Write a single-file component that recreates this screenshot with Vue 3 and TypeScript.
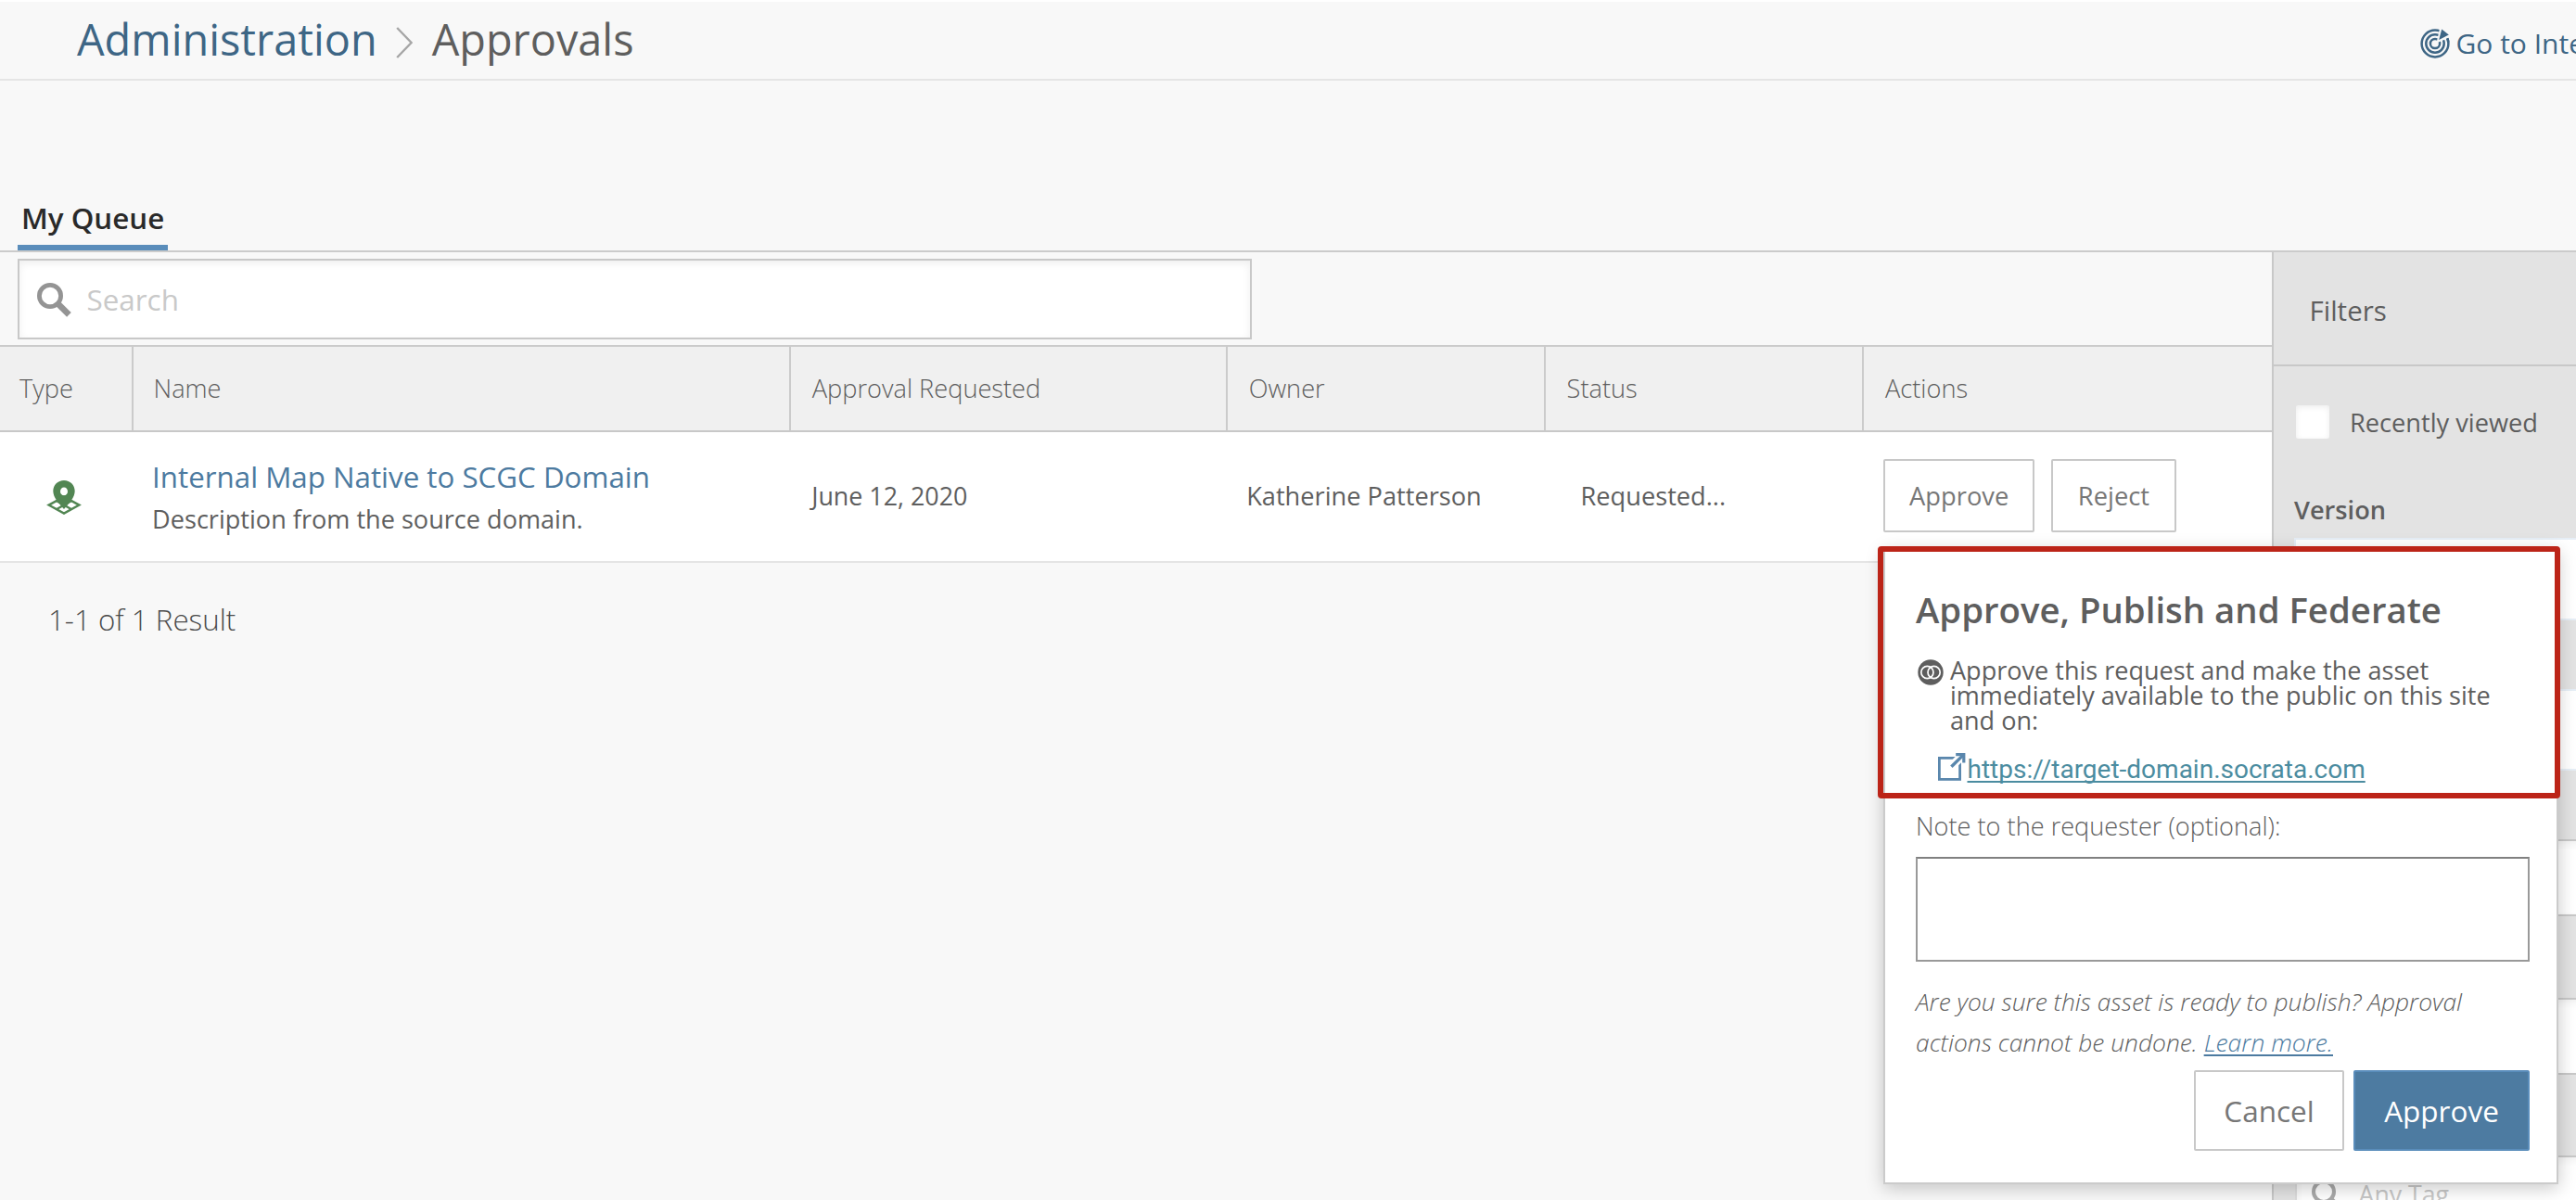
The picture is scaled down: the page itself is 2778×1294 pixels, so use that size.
<script setup lang="ts">
interface Column { key: string; label: string }

const columns: Column[] = [
  { key: 'type', label: 'Type' },
  { key: 'name', label: 'Name' },
  { key: 'date', label: 'Approval Requested' },
  { key: 'owner', label: 'Owner' },
  { key: 'status', label: 'Status' },
  { key: 'actions', label: 'Actions' }
]

const asset = {
  name: 'Internal Map Native to SCGC Domain',
  description: 'Description from the source domain.',
  requested: 'June 12, 2020',
  owner: 'Katherine Patterson',
  status: 'Requested...'
}
</script>

<template>
  <div class="page">
    <header class="topbar">
      <nav class="crumbs">
        <a class="crumb-link">Administration</a>
        <svg class="chevron" width="18" height="34" viewBox="0 0 18 34"><path d="M1.2 1 L16.6 17 L1.2 33" fill="none" stroke="#a6a6a6" stroke-width="2.4" /></svg>
        <span>Approvals</span>
      </nav>
      <a class="goto">
        <svg width="32" height="32" viewBox="0 0 32 32">
          <g fill="none" stroke="#3e6685" stroke-width="2.5">
            <circle cx="16" cy="16" r="14.4" />
            <circle cx="16" cy="16" r="9.7" />
            <circle cx="16" cy="16" r="5.1" />
          </g>
          <path d="M17.5 15.5 L21.2 -1 L33.5 8.6 Z" fill="#f8f8f8" />
          <path d="M29.2 10.2 A14.4 14.4 0 0 1 30.3 14.5" fill="none" stroke="#3e6685" stroke-width="2.5" />
          <path d="M20.2 12 L23.2 0.6 L30.8 6.6 Z" fill="#3e6685" />
        </svg>
        <span>Go to Internal</span>
      </a>
    </header>

    <div class="tabs"><a class="tab">My Queue</a></div>

    <main class="body">
      <section class="queue">
        <div class="search-row">
          <div class="search">
            <svg width="37" height="37" viewBox="0 0 37 37">
              <circle cx="14" cy="14" r="11.6" fill="none" stroke="#949494" stroke-width="4.8" />
              <path d="M22.6 22.6 L34.4 34.4" stroke="#949494" stroke-width="6.6" />
            </svg>
            <span>Search</span>
          </div>
        </div>

        <div class="grid head">
          <div v-for="c in columns" :key="c.key" class="th" :class="'th-' + c.key">{{ c.label }}</div>
        </div>

        <div class="grid row">
          <div class="cell-type">
            <svg width="38" height="38" viewBox="0 0 38 38">
              <g fill="none" stroke="#528653" stroke-width="2.4">
                <path d="M2.6 26.6 L19 17.6 L35.4 26.6 L19 35.6 Z" />
                <path d="M10.8 22 L27.2 31.2 M27.2 22 L10.8 31.2" />
              </g>
              <path fill-rule="evenodd" fill="#528653" d="M19 0 C25.6 0 30.7 5 30.7 11.6 C30.7 18.6 24.4 25 19 31 C13.6 25 7.3 18.6 7.3 11.6 C7.3 5 12.4 0 19 0 Z M19 7.6 A4 4.3 0 1 0 19 16.2 A4 4.3 0 1 0 19 7.6 Z" />
            </svg>
          </div>
          <div class="cell-name">
            <a class="asset">{{ asset.name }}</a>
            <span class="desc">{{ asset.description }}</span>
          </div>
          <div class="cell-date">{{ asset.requested }}</div>
          <div class="cell-owner">{{ asset.owner }}</div>
          <div class="cell-status">{{ asset.status }}</div>
          <div class="cell-actions">
            <button class="btn small approve-row">Approve</button>
            <button class="btn small reject-row">Reject</button>
          </div>
        </div>

        <div class="result">1-1 of 1 Result</div>
      </section>

      <aside class="filters">
        <div class="filters-head">Filters</div>
        <div class="recent"><span class="check"></span><span>Recently viewed</span></div>
        <div class="group-label">Version</div>
        <div class="select first"></div>
        <div class="select second"></div>
        <div class="field f1"></div>
        <div class="field f2"></div>
        <div class="field f3">
          <svg width="34" height="34" viewBox="0 0 34 34">
            <circle cx="13" cy="14" r="11" fill="none" stroke="#a9a9a9" stroke-width="4" />
            <path d="M21 22 L31 32" stroke="#a9a9a9" stroke-width="5" />
          </svg>
          <span>Any Tag</span>
        </div>
      </aside>
    </main>

    <div class="popup">
      <h2>Approve, Publish and Federate</h2>
      <div class="explain">
        <svg width="28" height="28" viewBox="0 0 28 28">
          <circle cx="14" cy="14" r="13.7" fill="#5e5e5e" />
          <g fill="none" stroke="#fff" stroke-width="1.7">
            <circle cx="10.4" cy="14" r="6.6" />
            <circle cx="17.6" cy="14" r="6.6" />
          </g>
        </svg>
        <p>Approve this request and make the asset<br />immediately available to the public on this site<br />and on:</p>
      </div>
      <div class="target">
        <svg width="30" height="31" viewBox="0 0 30 31">
          <rect x="1.4" y="5.4" width="22.2" height="23" fill="none" stroke="#5a87ad" stroke-width="2.8" />
          <path d="M12 17 L28 1" stroke="#fff" stroke-width="9" />
          <path d="M14.4 14.8 L27 2.4" stroke="#5a87ad" stroke-width="3.4" />
          <path d="M19.2 1.7 H27.8 V10.6" fill="none" stroke="#5a87ad" stroke-width="3.2" />
        </svg>
        <a>https://target-domain.socrata.com</a>
      </div>
      <label class="note">Note to the requester (optional):</label>
      <div class="note-box"></div>
      <p class="confirm">Are you sure this asset is ready to publish? Approval<br />actions cannot be undone. <a>Learn more.</a></p>
      <div class="buttons">
        <button class="btn cancel">Cancel</button>
        <button class="btn primary">Approve</button>
      </div>
      <div class="highlight"></div>
    </div>
  </div>
</template>

<style>
body { margin: 0; background: #f8f8f8; overflow: hidden; }
</style>

<style scoped>
.page, .page * { box-sizing: border-box; }
.page {
  position: relative;
  width: 2778px;
  height: 1294px;
  overflow: hidden;
  display: flex;
  flex-direction: column;
  background: #f8f8f8;
  color: #5e5e5e;
  font-family: "Open Sans", sans-serif;
  font-size: 27.2px;
  white-space: nowrap;
}
svg { display: block; flex: none; }
p, h2 { margin: 0; }

.topbar {
  flex: none;
  height: 87px;
  border-top: 2px solid #fff;
  border-bottom: 2px solid #e5e5e5;
  display: flex;
  align-items: flex-start;
  padding-left: 83px;
}
.crumbs { display: flex; align-items: flex-start; font-size: 46.85px; line-height: 81px; width: 2526.5px; flex: none; }
.crumb-link { color: #3e6685; }
.chevron { margin: 27px 21px 0 20px; }
.goto { display: flex; align-items: flex-start; color: #3e6685; font-size: 30px; line-height: 79px; padding-top: 5px; flex: none; }
.goto svg { margin: 23.5px 7px 0 0; }

.tabs { flex: none; height: 185px; border-bottom: 2px solid #cbcbcb; display: flex; align-items: flex-end; padding-left: 19px; }
.tab {
  width: 162px;
  padding: 0 0 7px 4px;
  border-bottom: 6px solid #5a8dbb;
  font-size: 31.3px;
  font-weight: 600;
  line-height: 44px;
  color: #2a2a2a;
}

.body { flex: 1; min-height: 0; display: flex; }
.queue { width: 2450px; flex: none; }
.search-row { height: 100px; padding: 7px 0 0 19px; }
.search {
  width: 1331px;
  height: 87px;
  border: 2px solid #c8c8c8;
  background: #fff;
  box-shadow: inset 0 3px 8px rgba(0, 0, 0, 0.07);
  display: flex;
  align-items: center;
  padding-left: 19px;
  font-size: 31.4px;
  color: #c9c9c9;
}
.search svg { margin: 2px 16.5px 0 0; }

.grid { display: grid; grid-template-columns: 143.6px 709.2px 470.9px 342.9px 343.4px 440px; }
.head { height: 94px; border-top: 2px solid #cbcbcb; border-bottom: 2px solid #c8c8c8; background: #f0f0f0; }
.th { display: flex; align-items: center; padding: 0 0 2px 23px; border-right: 2px solid #cbcbcb; font-weight: 300; }
.th-type { padding-left: 21px; }
.th-name { padding-left: 22px; }
.th-actions { border-right: 0; }

.row { height: 141px; border-bottom: 2px solid #e5e5e5; background: #fff; align-items: center; padding-bottom: 3px; }
.cell-type { padding: 5px 0 0 50px; }
.cell-name { padding: 2px 0 0 20.5px; display: flex; flex-direction: column; }
.asset { font-size: 31.3px; line-height: 46px; color: #4c7aa0; }
.desc { font-size: 27.1px; line-height: 40px; margin-top: 3px; position: relative; top: 0.5px; }
.cell-date { padding-left: 22.4px; font-size: 26.85px; }
.cell-owner { padding-left: 20.5px; }
.cell-status { padding-left: 38px; }
.cell-actions { padding: 0.5px 0 0 21px; display: flex; gap: 17.5px; }

.btn {
  height: 87px;
  padding: 0;
  border: 2px solid #c8c8c8;
  border-radius: 2px;
  background: #fff;
  color: #777;
  font: 400 31.5px "Open Sans", sans-serif;
}
.small { height: 78.5px; font-size: 27.3px; }
.approve-row { width: 163.5px; }
.reject-row { width: 135px; }

.result { padding: 39px 0 0 52px; font-size: 31.3px; line-height: 44px; font-weight: 300; color: #4a4a4a; }

.filters { flex: 1; min-width: 0; height: 1022px; overflow: hidden; border-left: 2px solid #c8c8c8; background: #e3e3e3; }
.filters-head { height: 123px; border-bottom: 2px solid #c8c8c8; display: flex; align-items: center; padding: 3px 0 0 38.5px; font-size: 29.5px; }
.recent { margin-top: 42px; height: 36px; padding-left: 24px; display: flex; align-items: center; }
.check { width: 36px; height: 36px; margin-right: 22px; background: #fff; box-shadow: inset 0 2px 6px rgba(0, 0, 0, 0.08); border-radius: 2px; }
.group-label { margin: 56.5px 0 10.5px 22px; line-height: 40px; font-weight: 600; }
.select { margin-left: 22px; width: 340px; height: 89px; background: #fff; border: 2px solid #e6eef6; }
.second { margin-top: 74px; height: 88px; }
.field {
  margin-left: 23px;
  width: 340px;
  height: 83px;
  background: #fff;
  border: 2px solid #c8c8c8;
  border-left-color: #dcdcdc;
  box-shadow: inset 0 3px 8px rgba(0, 0, 0, 0.06);
  display: flex;
  align-items: center;
  padding-left: 16px;
  font-size: 26.7px;
  color: #c8c8c8;
}
.field svg { margin-right: 16.5px; }
.f1 { margin-top: 74px; }
.f2 { margin-top: 88px; }
.f3 { margin-top: 87px; }

.popup {
  position: absolute;
  left: 2031px;
  top: 591px;
  width: 728px;
  height: 686px;
  padding: 38px 29px 0 33px;
  border: 2px solid #cbcbcb;
  background: #fff;
  box-shadow: 0 4px 18px rgba(0, 0, 0, 0.22);
}
.popup h2 { font-size: 38.35px; line-height: 52px; font-weight: 600; }
.explain { margin-top: 25.5px; display: flex; }
.explain svg { margin: 2.5px 7.5px 0 1.5px; }
.explain p { font-size: 27.05px; line-height: 27.2px; padding-top: 0.5px; }
.target { margin-top: 21.3px; display: flex; padding-left: 24px; }
.target svg { margin: 0 1.5px 0 0; }
.target a {
  font: 400 28px/36px Roboto, sans-serif;
  color: #4b8ca0;
  text-decoration: underline;
  text-decoration-thickness: 2px;
  text-underline-offset: 3px;
  text-decoration-skip-ink: none;
}
.note { display: block; margin-top: 23.5px; line-height: 40px; font-size: 27.15px; font-weight: 300; }
.note-box { margin-top: 13px; width: 662px; height: 113px; border: 2px solid #999; border-top-color: #808080; }
.confirm { margin-top: 20.5px; font-size: 26.4px; line-height: 44px; font-weight: 300; font-style: italic; }
.confirm a {
  font-size: 26.5px;
  color: #4c7aa0;
  text-decoration: underline;
  text-decoration-thickness: 2px;
  text-underline-offset: 3px;
  text-decoration-skip-ink: none;
}
.buttons { margin-top: 8.5px; width: 662px; display: flex; justify-content: flex-end; gap: 10px; }
.cancel { width: 162px; }
.primary { width: 190px; background: #4d7ba1; border-color: #5a8dbb; color: #fff; }
.highlight { position: absolute; left: -8px; top: -4px; width: 736px; height: 272px; border: 6px solid #bc2418; border-radius: 4px; }
</style>
